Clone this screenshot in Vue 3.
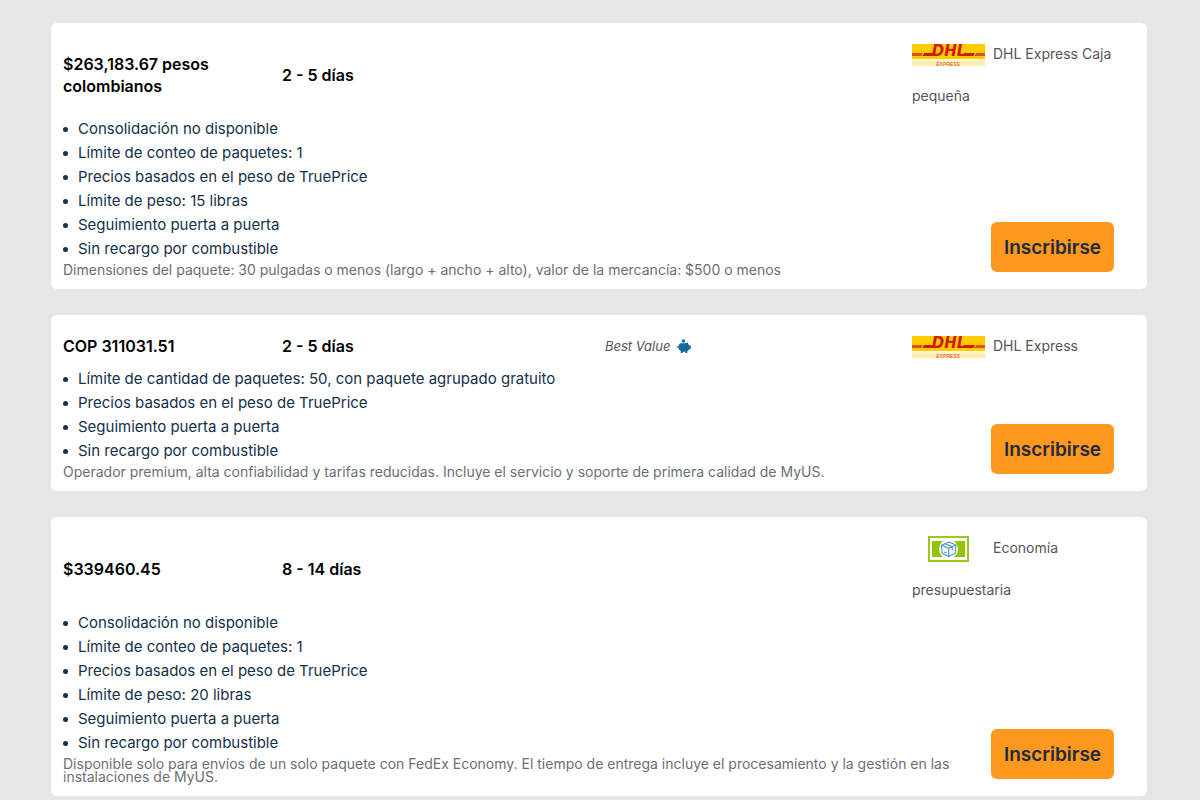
<script setup>
const plans = [
  {
    price: '$263,183.67 pesos colombianos',
    time: '2 - 5 días',
    carrier: 'DHL Express Caja pequeña',
    logo: 'dhl',
    features: [
      'Consolidación no disponible',
      'Límite de conteo de paquetes: 1',
      'Precios basados en el peso de TruePrice',
      'Límite de peso: 15 libras',
      'Seguimiento puerta a puerta',
      'Sin recargo por combustible',
    ],
    note: 'Dimensiones del paquete: 30 pulgadas o menos (largo + ancho + alto), valor de la mercancía: $500 o menos',
  },
  {
    price: 'COP 311031.51',
    time: '2 - 5 días',
    badge: 'Best Value',
    carrier: 'DHL Express',
    logo: 'dhl',
    features: [
      'Límite de cantidad de paquetes: 50, con paquete agrupado gratuito',
      'Precios basados en el peso de TruePrice',
      'Seguimiento puerta a puerta',
      'Sin recargo por combustible',
    ],
    note: 'Operador premium, alta confiabilidad y tarifas reducidas. Incluye el servicio y soporte de primera calidad de MyUS.',
  },
  {
    price: '$339460.45',
    time: '8 - 14 días',
    carrier: 'Economía presupuestaria',
    logo: 'economy',
    features: [
      'Consolidación no disponible',
      'Límite de conteo de paquetes: 1',
      'Precios basados en el peso de TruePrice',
      'Límite de peso: 20 libras',
      'Seguimiento puerta a puerta',
      'Sin recargo por combustible',
    ],
    note: 'Disponible solo para envíos de un solo paquete con FedEx Economy. El tiempo de entrega incluye el procesamiento y la gestión en las instalaciones de MyUS.',
  },
]
</script>

<template>
  <main class="plans">
    <article v-for="plan in plans" :key="plan.price" class="card">
      <header class="head">
        <h2 class="title">{{ plan.price }}</h2>
        <p class="title">{{ plan.time }}</p>
        <p class="badge">
          <template v-if="plan.badge">
            <span>{{ plan.badge }}</span>
            <svg width="14" height="16" viewBox="0 0 14 16" fill="#17689f" aria-hidden="true">
              <circle cx="6.500" cy="3" r="1.8" />
              <path d="M3.4 5.2 Q7 5.600 9 5 L11.2 4.2 L11 6 Q12 6.8 12.4 7.6 L13.8 7.8 V10.8 L12.2 11.2 Q11.5 12.3 10.4 13 V15 H8.4 V13.8 H5.8 V15 H3.8 V13 Q1.8 11.9 1.3 9.9 Q.2 9.6 .1 7.8 L.8 7.7 Q.9 8.6 1.4 8.5 Q1.8 6.3 3.4 5.2Z" />
            </svg>
          </template>
        </p>
        <p class="carrier">
          <svg v-if="plan.logo === 'dhl'" class="logo" width="73" height="24" viewBox="0 0 73 24" aria-hidden="true">
            <rect y="1" width="73" height="15" fill="#fc0" />
            <rect y="16" width="73" height="2" fill="#fff8dc" />
            <rect y="18" width="73" height="5" fill="#ffedb0" />
            <path d="M0 10H11L9.5 13H0ZM64 10H73V13H62.5Z" fill="#d9541e" />
            <path d="M12 10H22L21 13H10.500ZM52 10H63L61.500 13H51Z" fill="#d3180c" />
            <text class="dhl" x="37" y="13" text-anchor="middle">DHL</text>
            <text class="express" x="36" y="23" text-anchor="middle">EXPRESS</text>
          </svg>
          <svg v-else class="logo" width="73" height="26" viewBox="0 0 73 26" aria-hidden="true">
            <rect x="17" y="1" width="39" height="24" fill="#fff" stroke="#9ac71c" stroke-width="2" />
            <path d="M20 5H31V21H20ZM42 5H53V21H42Z" fill="#94c600" />
            <circle cx="36.5" cy="13" r="9.5" fill="#fff" />
            <path d="M29.5 9.3L37 6L44 9L43.2 17.2L36.6 20.5L30 17.3ZM29.5 9.3L36.7 12.3L44 9M36.7 12.3V20.5M33.2 7.7L40.3 10.7V14M32 16L34.3 17" fill="#f2f8fd" stroke="#4c94d2" stroke-width="1.1" stroke-linejoin="round" />
          </svg>{{ plan.carrier }}
        </p>
      </header>
      <div class="body">
        <div class="details">
          <ul class="features">
            <li v-for="feature in plan.features" :key="feature">{{ feature }}</li>
          </ul>
          <p class="note">{{ plan.note }}</p>
        </div>
        <button type="button" class="join">Inscribirse</button>
      </div>
    </article>
  </main>
</template>

<style>
html,
body {
  background: #e6e6e6;
}
</style>

<style scoped>
.plans {
  display: flex;
  flex-direction: column;
  gap: 26px;
  padding: 23px 53px 5px 51px;
  font-family: Inter, "Open Sans", sans-serif;
}
.card {
  padding: 10px 12px 13px;
  border-radius: 6px;
  background: #fff;
}
.head {
  display: grid;
  grid-template-columns: 219fr 323fr 307fr 223fr;
  align-items: center;
}
.title,
.badge,
.carrier,
.note {
  margin: 0;
}
.title {
  font-size: 16px;
  font-weight: 600;
  line-height: 22px;
  color: #000;
}
.badge {
  display: flex;
  align-items: center;
  gap: 7px;
  font-size: 13px;
  font-style: italic;
  color: #555;
}
.carrier {
  padding-right: 20px;
  font-size: 14px;
  line-height: 42px;
  color: #555;
}
.logo {
  margin-right: 8px;
  vertical-align: middle;
  overflow: visible;
}
.dhl {
  font: italic bold 15px "DejaVu Sans", sans-serif;
  fill: #d3180c;
}
.express {
  font: italic 5px "Liberation Sans", sans-serif;
  fill: #d9541e;
}
.body {
  display: flex;
  align-items: flex-end;
  gap: 30px;
  padding-right: 21px;
}
.details {
  flex: 1;
}
.features {
  margin: 0 0 2px;
  padding: 0;
  list-style: none;
  font-size: 15px;
  line-height: 24px;
  color: #14304a;
}
.features li {
  display: flex;
  align-items: center;
  gap: 10px;
}
.features li::before {
  content: "";
  width: 5px;
  height: 5px;
  border-radius: 50%;
  background: #14304a;
}
.note {
  font-size: 14px;
  line-height: 13px;
  color: #6b6f73;
}
.join {
  width: 123px;
  height: 50px;
  margin-bottom: 4px;
  padding: 0;
  border: 0;
  border-radius: 6px;
  background: #ff981f;
  color: #1c2b39;
  font: 600 19px Inter, "Open Sans", sans-serif;
}
</style>
